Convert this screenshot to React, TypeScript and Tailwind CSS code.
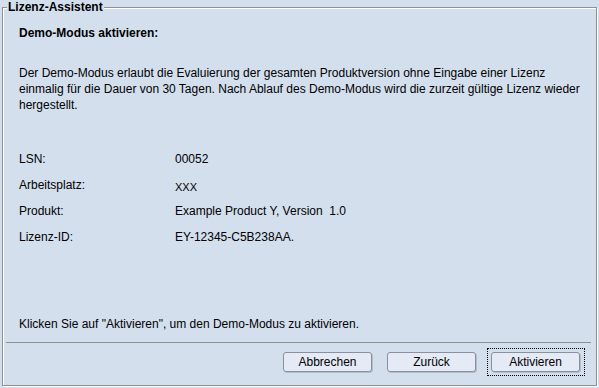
const rows = [
  { label: "LSN:", value: "00052" },
  { label: "Arbeitsplatz:", value: "XXX" },
  { label: "Produkt:", value: "Example Product Y, Version  1.0" },
  { label: "Lizenz-ID:", value: "EY-12345-C5B238AA." },
];

function Button({ label, className = "" }: { label: string; className?: string }) {
  return (
    <button
      className={`block w-[89px] h-[20px] rounded-[3px] border border-[#8a909c] bg-[#e4eaf6] text-[12px] leading-[18px] text-black shadow-[1px_1px_0_#b5bccb] ${className}`}
    >
      {label}
    </button>
  );
}

export default function App() {
  return (
    <div
      className="w-[599px] h-[388px] bg-[#d4dfee] pt-[7px] pl-[2px] text-black"
      style={{ fontFamily: '"Liberation Sans", Arial, sans-serif' }}
    >
      {/* titled etched border */}
      <div className="relative w-[595px] h-[379px] border border-[#8e9094] shadow-[1px_1px_0_#fff,inset_1px_1px_0_#fff] flex flex-col">
        <span className="absolute -top-[8px] left-[4px] px-[1px] bg-[#d4dfee] text-[12px] leading-[14px] font-bold">
          Lizenz-Assistent
        </span>

        <div className="pl-4 pt-[17px] text-[12px] leading-[16px] font-bold">Demo-Modus aktivieren:</div>

        <p className="pl-4 mt-6 text-[12px] leading-[16px] whitespace-nowrap">
          Der Demo-Modus erlaubt die Evaluierung der gesamten Produktversion ohne Eingabe einer Lizenz
          <br />
          einmalig für die Dauer von 30 Tagen. Nach Ablauf des Demo-Modus wird die zurzeit gültige Lizenz wieder
          <br />
          hergestellt.
        </p>

        <div className="mt-[33px] pl-4 flex flex-col text-[12px] leading-[16px]">
          {rows.map((r) => (
            <div key={r.label} className="h-[26px] flex items-center">
              <span className="w-[156px]">{r.label}</span>
              <span className={r.value === "XXX" ? "text-[11px] mt-[3px]" : "whitespace-pre"}>{r.value}</span>
            </div>
          ))}
        </div>

        <div className="mt-[66px] pl-4 text-[12px] leading-[16px]">
          Klicken Sie auf "Aktivieren", um den Demo-Modus zu aktivieren.
        </div>

        <div className="mt-[10px] ml-[3px] mr-[5px] h-px bg-[#8e9094]" />

        <div className="mt-[5px] flex justify-end items-center pr-[11px]">
          <Button label="Abbrechen" />
          <Button label="Zurück" className="ml-[15px]" />
          {/* focused button */}
          <div className="ml-[11px] border border-dotted border-black pt-[3px] pb-[3px] pl-[3px] pr-[4px]">
            <Button label="Aktivieren" />
          </div>
        </div>
      </div>
    </div>
  );
}
